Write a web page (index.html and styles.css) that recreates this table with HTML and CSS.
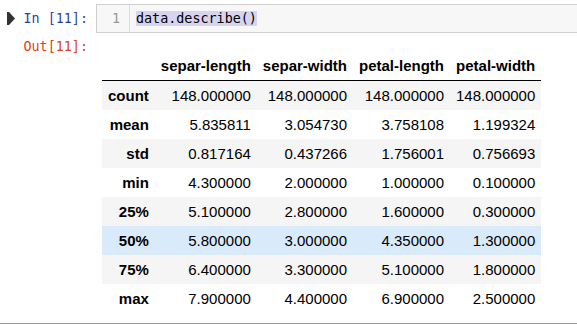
FILE: index.html
```html
<!DOCTYPE html>
<html lang="en">
<head>
    <meta charset="UTF-8">
    <title>data.describe()</title>
    <link rel="stylesheet" href="styles.css">
</head>
<body>
    <div class="cell">
        <div class="input-row">
            <div class="prompt in-prompt">
                <svg class="run-icon" width="8" height="13" viewBox="0 0 8 13">
                    <rect x="0" y="0" width="2" height="13" fill="#333"/>
                    <polygon points="2,0 8,6.5 2,13" fill="#333"/>
                </svg>
                <span>In [11]:</span>
            </div>
            <div class="code-box">
                <div class="gutter">1</div>
                <div class="code"><span class="selected">data.describe()</span></div>
            </div>
        </div>

        <div class="output-row">
            <div class="prompt out-prompt">Out[11]:</div>
            <div class="output-area">
                <table class="dataframe">
                    <thead>
                        <tr>
                            <th></th>
                            <th>separ-length</th>
                            <th>separ-width</th>
                            <th>petal-length</th>
                            <th>petal-width</th>
                        </tr>
                    </thead>
                    <tbody>
                        <tr><th>count</th><td>148.000000</td><td>148.000000</td><td>148.000000</td><td>148.000000</td></tr>
                        <tr><th>mean</th><td>5.835811</td><td>3.054730</td><td>3.758108</td><td>1.199324</td></tr>
                        <tr><th>std</th><td>0.817164</td><td>0.437266</td><td>1.756001</td><td>0.756693</td></tr>
                        <tr><th>min</th><td>4.300000</td><td>2.000000</td><td>1.000000</td><td>0.100000</td></tr>
                        <tr><th>25%</th><td>5.100000</td><td>2.800000</td><td>1.600000</td><td>0.300000</td></tr>
                        <tr class="hover"><th>50%</th><td>5.800000</td><td>3.000000</td><td>4.350000</td><td>1.300000</td></tr>
                        <tr><th>75%</th><td>6.400000</td><td>3.300000</td><td>5.100000</td><td>1.800000</td></tr>
                        <tr><th>max</th><td>7.900000</td><td>4.400000</td><td>6.900000</td><td>2.500000</td></tr>
                    </tbody>
                </table>
            </div>
        </div>
    </div>
</body>
</html>
```

FILE: styles.css
```css
body {
    margin: 0;
    background-color: #fff;
    overflow: hidden;
    font-family: "Liberation Sans", Arial, sans-serif;
}
.cell {
    border-bottom: 1px solid #66bb6a;
}
.input-row {
    display: flex;
    margin-top: 4px;
}
.prompt {
    width: 96px;
    flex-shrink: 0;
    box-sizing: border-box;
    padding-right: 8px;
    font-family: "DejaVu Sans Mono", monospace;
    font-size: 13.4px;
    line-height: 17px;
    text-align: right;
}
.in-prompt {
    display: flex;
    justify-content: space-between;
    align-items: flex-start;
    padding-top: 6px;
    padding-left: 7px;
    color: #303f9f;
}
.run-icon {
    margin-top: 2px;
}
.code-box {
    display: flex;
    flex: 1;
    margin-right: -2px;
    background-color: #f7f7f7;
    border: 1px solid #cfcfcf;
    font-family: "DejaVu Sans Mono", monospace;
    font-size: 13.4px;
    line-height: 17px;
}
.gutter {
    width: 33px;
    box-sizing: border-box;
    padding: 5px 9px 5px 0;
    text-align: right;
    color: #999;
    border-right: 1px solid #ddd;
}
.code {
    padding: 5px 6px;
    color: #000;
}
.selected {
    background-color: #d7d4f0;
}
.output-row {
    display: flex;
}
.out-prompt {
    padding-top: 5px;
    color: #d84315;
}
.output-area {
    padding: 18px 0 10px 6px;
}
.dataframe {
    border-collapse: collapse;
    font-size: 15px;
    line-height: 17px;
    color: #000;
}
.dataframe th,
.dataframe td {
    padding: 6px;
    text-align: right;
    white-space: nowrap;
}
.dataframe th {
    font-weight: bold;
}
.dataframe thead th {
    border-bottom: 1px solid #000;
}
.dataframe tbody tr:nth-child(odd) {
    background-color: #f5f5f5;
}
.dataframe tbody tr.hover {
    background-color: #d9ebfa;
}
```
